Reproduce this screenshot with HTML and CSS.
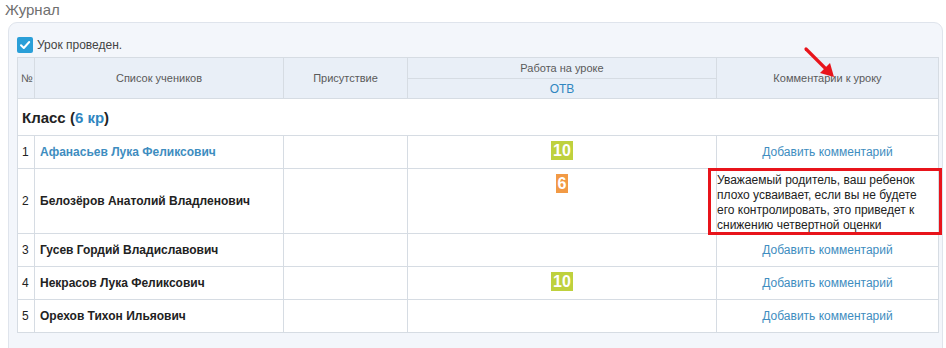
FILE: index.html
```html
<!DOCTYPE html>
<html lang="ru">
<head>
    <meta charset="UTF-8">
    <title>Журнал</title>
    <link rel="stylesheet" href="styles.css">
</head>
<body>
    <div class="page-title">Журнал</div>

    <div class="panel">
        <label class="lesson-done">
            <span class="checkbox">
                <svg width="12" height="12" viewBox="0 0 12 12"><path d="M2 6.2 L4.8 9 L10.2 3" fill="none" stroke="#fff" stroke-width="2" stroke-linecap="round" stroke-linejoin="round"/></svg>
            </span>
            Урок проведен.
        </label>

        <table class="journal">
            <thead>
                <tr>
                    <th class="col-num" rowspan="2">№</th>
                    <th class="col-name" rowspan="2">Список учеников</th>
                    <th class="col-pres" rowspan="2">Присутствие</th>
                    <th class="col-work">Работа на уроке</th>
                    <th class="col-comment" rowspan="2">
                        Комментарии к уроку
                        <svg class="arrow" width="36" height="36" viewBox="0 0 36 36">
                            <line x1="4" y1="4" x2="25" y2="25" stroke="#e8141b" stroke-width="3.2" stroke-linecap="round"/>
                            <polygon points="32,32 18,28 28,18" fill="#e8141b"/>
                        </svg>
                    </th>
                </tr>
                <tr>
                    <th class="sub">ОТВ</th>
                </tr>
            </thead>
            <tbody>
                <tr class="group">
                    <td colspan="5">Класс (<span class="blue">6 кр</span>)</td>
                </tr>
                <tr>
                    <td class="num">1</td>
                    <td class="name current">Афанасьев Лука Феликсович</td>
                    <td></td>
                    <td class="grade"><span class="mark good">10</span></td>
                    <td class="comment"><a href="#">Добавить комментарий</a></td>
                </tr>
                <tr>
                    <td class="num">2</td>
                    <td class="name">Белозёров Анатолий Владленович</td>
                    <td></td>
                    <td class="grade"><span class="mark bad">6</span></td>
                    <td class="comment note">Уважаемый родитель, ваш ребенок<br>плохо усваивает, если вы не будете<br>его контролировать, это приведет к<br>снижению четвертной оценки</td>
                </tr>
                <tr>
                    <td class="num">3</td>
                    <td class="name">Гусев Гордий Владиславович</td>
                    <td></td>
                    <td class="grade"></td>
                    <td class="comment"><a href="#">Добавить комментарий</a></td>
                </tr>
                <tr>
                    <td class="num">4</td>
                    <td class="name">Некрасов Лука Феликсович</td>
                    <td></td>
                    <td class="grade"><span class="mark good">10</span></td>
                    <td class="comment"><a href="#">Добавить комментарий</a></td>
                </tr>
                <tr>
                    <td class="num">5</td>
                    <td class="name">Орехов Тихон Ильяович</td>
                    <td></td>
                    <td class="grade"></td>
                    <td class="comment"><a href="#">Добавить комментарий</a></td>
                </tr>
            </tbody>
        </table>
    </div>
</body>
</html>
```

FILE: styles.css
```css
body {
    margin: 0;
    background-color: #ffffff;
    font-family: "Liberation Sans", Arial, sans-serif;
    color: #222;
}

.page-title {
    padding: 1px 0 0 5px;
    height: 21px;
    font-size: 15px;
    line-height: 18px;
    color: #6f6f6f;
}

.panel {
    margin: 0 3px 0 8px;
    padding: 10px 3px 30px 8px;
    background-color: #f3f6fb;
    border: 1px solid #dfe4ec;
    border-radius: 9px 9px 0 0;
}

.lesson-done {
    display: flex;
    align-items: center;
    gap: 4px;
    height: 24px;
    font-size: 12px;
    color: #444;
}

.checkbox {
    width: 16px;
    height: 16px;
    border-radius: 2px;
    background-color: #2a9fd8;
    display: flex;
    align-items: center;
    justify-content: center;
}

/* Journal table */
.journal {
    width: 100%;
    border-collapse: collapse;
    table-layout: fixed;
    background-color: #ffffff;
    font-size: 12px;
}

.journal th,
.journal td {
    border: 1px solid #d6dce3;
    padding: 0 5px;
}

.journal th {
    background-color: #e9eff7;
    color: #5a5a5a;
    font-weight: normal;
    font-size: 11px;
    height: 20px;
}

.journal th.col-num {
    width: 13px;
    padding: 0 0 0 3px;
    text-align: left;
}

.col-name { width: 238px; }
.col-pres { width: 113px; }
.col-work { width: 298px; }

.journal th.sub {
    color: #2f86c0;
    font-size: 12px;
    height: 19px;
}

.col-comment {
    position: relative;
}

.arrow {
    position: absolute;
    left: 85px;
    top: -13px;
}

.blue {
    color: #2f86c0;
}

.journal tbody tr {
    height: 33px;
}

.journal .group td {
    height: 36px;
    font-size: 15px;
    font-weight: bold;
    padding-left: 4px;
    color: #222;
}

.journal td.num {
    padding: 0 0 0 4px;
}

.name {
    font-weight: bold;
}

.name.current {
    color: #3e8dc0;
}

.journal td.grade {
    vertical-align: top;
    text-align: center;
    padding-top: 5px;
    line-height: 19px;
}

.mark {
    display: inline-block;
    vertical-align: top;
    padding: 0 2px;
    height: 19px;
    line-height: 19px;
    font-size: 16px;
    font-weight: bold;
    color: #ffffff;
}

.mark.good {
    background-color: #bfd13d;
}

.mark.bad {
    background-color: #f29a45;
}

.comment {
    text-align: center;
}

.comment a {
    color: #3e8dc0;
    text-decoration: none;
}

.journal td.note {
    position: relative;
    text-align: left;
    height: 59px;
    padding: 4px 0 0 0;
    line-height: 15px;
    color: #222;
    white-space: nowrap;
    vertical-align: top;
}

/* red highlight box over the note */
.note::after {
    content: "";
    position: absolute;
    left: -9px;
    right: -4px;
    top: -1px;
    bottom: -2px;
    border: 3px solid #e8141b;
}
```
